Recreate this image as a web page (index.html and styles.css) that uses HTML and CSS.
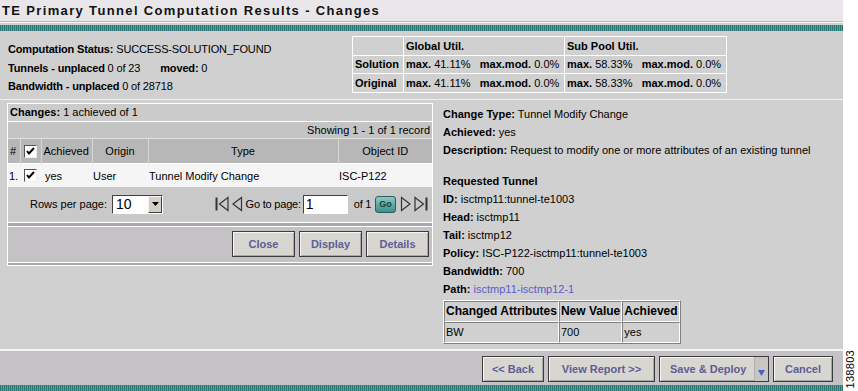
FILE: index.html
```html
<!doctype html>
<html>

<head>
    <link rel="stylesheet" href="styles.css">
</head>

<body>
    <div class="page">
        <div class="main">
            <div class="titlebar">TE Primary Tunnel Computation Results - Changes</div>
            <div class="stripe"></div>

            <div class="summary">
                <div class="status">
                    <div><b>Computation Status:</b> SUCCESS-SOLUTION_FOUND</div>
                    <div><b>Tunnels - unplaced</b> 0 of 23<span class="spacer"></span><b>moved:</b> 0</div>
                    <div><b>Bandwidth - unplaced</b> 0 of 28718</div>
                </div>
                <table class="util">
                    <tr>
                        <th class="c1"></th>
                        <th class="c2">Global Util.</th>
                        <th class="c3">Sub Pool Util.</th>
                    </tr>
                    <tr>
                        <th>Solution</th>
                        <td><b>max.</b> 41.11% &nbsp; <b>max.mod.</b> 0.0%</td>
                        <td><b>max.</b> 58.33% &nbsp; <b>max.mod.</b> 0.0%</td>
                    </tr>
                    <tr>
                        <th>Original</th>
                        <td><b>max.</b> 41.11% &nbsp; <b>max.mod.</b> 0.0%</td>
                        <td><b>max.</b> 58.33% &nbsp; <b>max.mod.</b> 0.0%</td>
                    </tr>
                </table>
            </div>

            <div class="content">
                <div class="changes">
                    <div class="changes-head"><b>Changes:</b> 1 achieved of 1</div>
                    <div class="showing">Showing 1 - 1 of 1 record</div>
                    <table class="grid">
                        <colgroup>
                            <col class="g-num">
                            <col class="g-chk">
                            <col class="g-ach">
                            <col class="g-org">
                            <col class="g-type">
                            <col>
                        </colgroup>
                        <tr>
                            <th class="left">#</th>
                            <th><span class="check"></span></th>
                            <th class="left">Achieved</th>
                            <th>Origin</th>
                            <th>Type</th>
                            <th>Object ID</th>
                        </tr>
                        <tr class="row">
                            <td>1.</td>
                            <td class="mid"><span class="check"></span></td>
                            <td class="pad">yes</td>
                            <td>User</td>
                            <td>Tunnel Modify Change</td>
                            <td>ISC-P122</td>
                        </tr>
                    </table>
                    <div class="pager">
                        <div class="rows">
                            Rows per page:
                            <span class="select"><span class="select-val">10</span><span class="select-btn"><svg width="7" height="4" viewBox="0 0 7 4"><path d="M0 0h7L3.5 4z" fill="#000"/></svg></span></span>
                        </div>
                        <div class="nav">
                            <svg class="nav-icon" width="14" height="16" viewBox="0 0 14 16"><path d="M1.5 1.5v13" stroke="#333" stroke-width="2"/><path d="M13 1.5L4.5 8L13 14.5z" fill="none" stroke="#333" stroke-width="1.2"/></svg>
                            <svg class="nav-icon" width="12" height="16" viewBox="0 0 12 16"><path d="M10.5 1.5L2 8L10.5 14.5z" fill="none" stroke="#333" stroke-width="1.2"/></svg>
                            <span class="goto">Go to page:</span>
                            <span class="page-input">1</span>
                            <span class="of">of 1</span>
                            <span class="go">Go</span>
                            <svg class="nav-icon" width="12" height="16" viewBox="0 0 12 16"><path d="M1.5 1.5L10 8L1.5 14.5z" fill="none" stroke="#333" stroke-width="1.2"/></svg>
                            <svg class="nav-icon" width="14" height="16" viewBox="0 0 14 16"><path d="M1 1.5L9.5 8L1 14.5z" fill="none" stroke="#333" stroke-width="1.2"/><path d="M12.5 1.5v13" stroke="#333" stroke-width="2"/></svg>
                        </div>
                    </div>
                    <div class="sep"></div>
                    <div class="actions">
                        <button class="btn w63">Close</button>
                        <button class="btn w63">Display</button>
                        <button class="btn w63">Details</button>
                    </div>
                    <div class="sep bottom"></div>
                </div>

                <div class="details">
                    <div><b>Change Type:</b> Tunnel Modify Change</div>
                    <div><b>Achieved:</b> yes</div>
                    <div><b>Description:</b> Request to modify one or more attributes of an existing tunnel</div>
                    <div class="gap"><b>Requested Tunnel</b></div>
                    <div><b>ID:</b> isctmp11:tunnel-te1003</div>
                    <div><b>Head:</b> isctmp11</div>
                    <div><b>Tail:</b> isctmp12</div>
                    <div><b>Policy:</b> ISC-P122-isctmp11:tunnel-te1003</div>
                    <div><b>Bandwidth:</b> 700</div>
                    <div><b>Path:</b> <span class="link">isctmp11-isctmp12-1</span></div>
                    <table class="attrs">
                        <tr>
                            <th>Changed Attributes</th>
                            <th>New Value</th>
                            <th>Achieved</th>
                        </tr>
                        <tr>
                            <td>BW</td>
                            <td>700</td>
                            <td>yes</td>
                        </tr>
                    </table>
                </div>
            </div>

            <div class="footer">
                <button class="btn w62">&lt;&lt; Back</button>
                <button class="btn w107">View Report &gt;&gt;</button>
                <button class="btn split"><span class="split-label">Save &amp; Deploy</span><span class="split-arrow"><svg width="7" height="6" viewBox="0 0 7 6"><path d="M0 0h7L3.5 6z" fill="#4b5fc8"/></svg></span></button>
                <button class="btn w60">Cancel</button>
            </div>
            <div class="stripe"></div>
        </div>
        <div class="strip">
            <span class="figno">138803</span>
        </div>
    </div>
</body>

</html>
```

FILE: styles.css
```css
body {
    margin: 0;
    background: #fff;
    font-family: "Liberation Sans", Arial, sans-serif;
    font-size: 11px;
    color: #000;
    overflow: hidden
}

.page {
    display: flex;
    height: 391px;
    width: 858px;
}

.main {
    width: 843px;
    display: flex;
    flex-direction: column;
    background: #d0d0d0;
}

.strip {
    width: 15px;
    display: flex;
    align-items: flex-end;
    justify-content: center;
    background: #fff;
}

.figno {
    writing-mode: vertical-rl;
    transform: rotate(180deg);
    font-size: 11px;
    line-height: 11px;
    padding-top: 2px;
    letter-spacing: 0.3px;
}

.titlebar {
    height: 21px;
    line-height: 22px;
    padding-left: 2px;
    background: #e8e6e8;
    border-bottom: 1px solid #b8b8b8;
    box-shadow: 0 1px 0 #f8f8f8;
    font-size: 13px;
    font-weight: bold;
    letter-spacing: 1.35px;
    color: #111;
    margin-bottom: 3px;
}

.stripe {
    height: 6px;
    background: repeating-linear-gradient(90deg, #2a7672 0 1px, #53a39d 1px 2px);
    flex: none;
}

.summary {
    display: flex;
    height: 68px;
    padding-left: 8px;
    border-bottom: 1px solid #f0f0f0;
}

.status {
    width: 344px;
    padding-top: 9px;
    line-height: 18.5px;
    letter-spacing: -0.15px;
}

.spacer {
    display: inline-block;
    width: 20px;
}

.util {
    border-collapse: collapse;
    margin-top: 5px;
    height: 57px;
    align-self: flex-start;
}

.util th,
.util td {
    border: 1px solid #fff;
    padding: 0 1px 0 2px;
    text-align: left;
    white-space: nowrap;
}

.util .c1 { width: 47px; }
.util .c2 { width: 157px; }
.util .c3 { width: 158px; }

.content {
    display: flex;
    height: 248px;
}

.changes {
    width: 424px;
    margin: 3px 0 0 7px;
    border-left: 1px solid #fff;
    border-right: 1px solid #fff;
    align-self: flex-start;
}

.changes-head {
    height: 17px;
    line-height: 17px;
    padding-left: 2px;
    background: #cbcbcb;
    border-top: 1px solid #fff;
    border-bottom: 1px solid #fff;
}

.showing {
    height: 16px;
    line-height: 16px;
    text-align: right;
    background: #c4c4c4;
    padding-right: 2px;
}

.grid {
    width: 100%;
    border-collapse: collapse;
    table-layout: fixed;
}

.grid .g-num { width: 12px; }
.grid .g-chk { width: 21px; }
.grid .g-ach { width: 51px; }
.grid .g-org { width: 56px; }
.grid .g-type { width: 190px; }

.grid th {
    height: 24px;
    background: #b7b7b7;
    font-weight: normal;
    border-left: 1px solid #d8d8d8;
    border-top: 1px solid #e0e0e0;
    padding: 0;
}

.grid th.left {
    text-align: left;
    padding-left: 2px;
}

.grid th:first-child {
    border-left: none;
}

.grid td {
    height: 23px;
    background: #f5f5f5;
    border-top: 1px solid #fff;
    text-align: left;
    padding: 0 0 0 1px;
    white-space: nowrap;
}

.grid td.mid {
    text-align: center;
    padding: 0;
}

.grid td.pad {
    padding-left: 4px;
}

.check {
    display: inline-block;
    width: 11px;
    height: 11px;
    background: #fff url("data:image/svg+xml,%3Csvg xmlns='http://www.w3.org/2000/svg' width='11' height='11'%3E%3Cpath d='M2 5l2 2.5L9 2' fill='none' stroke='%23000' stroke-width='2'/%3E%3C/svg%3E") no-repeat;
    border: 1px solid;
    border-color: #555 #eee #eee #555;
    vertical-align: middle;
}

.pager {
    display: flex;
    align-items: center;
    justify-content: space-between;
    height: 34px;
    background: #c9c9c9;
    padding: 0 4px 0 22px;
}

.rows {
    display: flex;
    align-items: center;
    gap: 5px;
}

.select {
    display: flex;
    width: 49px;
    height: 17px;
    background: #fff;
    border: 1px solid;
    border-color: #404040 #fff #fff #404040;
    font-size: 14px;
}

.select-val {
    flex: 1;
    line-height: 17px;
    padding-left: 3px;
}

.select-btn {
    width: 14px;
    display: flex;
    align-items: center;
    justify-content: center;
    background: #d4d0c8;
    border: 1px solid;
    border-color: #f4f4f4 #404040 #404040 #f4f4f4;
    box-sizing: border-box;
}

.nav {
    display: flex;
    align-items: center;
    gap: 2px;
}

.goto {
    margin-left: 1px;
    letter-spacing: -0.2px;
}

.page-input {
    width: 41px;
    height: 17px;
    line-height: 17px;
    padding-left: 2px;
    background: #fff;
    border: 1px solid;
    border-color: #404040 #fff #fff #404040;
    font-size: 14px;
}

.of {
    margin-left: 4px;
    letter-spacing: -0.3px;
}

.go {
    width: 19px;
    height: 15px;
    line-height: 15px;
    border-radius: 3px;
    background: linear-gradient(#8cc8c4, #3f8f8b);
    border: 1px solid #2b5f5c;
    color: #12413f;
    font-size: 9px;
    font-weight: bold;
    text-align: center;
    margin: 0 2px;
}

.sep {
    height: 3px;
    border-top: 1px solid #fff;
    border-bottom: 1px solid #fff;
    background: #a8a8a8;
    margin-top: 1px;
}

.sep.bottom {
    margin-top: 0;
    height: 2px;
}

.actions {
    display: flex;
    justify-content: flex-end;
    gap: 4px;
    padding: 4px 3px 5px;
    background: #c4c2c4;
    height: 26px;
}

.btn {
    font-family: "Liberation Sans", Arial, sans-serif;
    font-size: 11px;
    font-weight: bold;
    color: #5d5d96;
    background: #d8d6d0;
    border: 1px solid #3c3c3c;
    box-shadow: inset 1px 1px 0 #f4f4f4, inset -1px -1px 0 #a8a8a8;
    height: 26px;
    padding: 0;
    margin: 0;
}

.w63 { width: 63px; }
.w62 { width: 62px; }
.w60 { width: 60px; }
.w107 { width: 107px; }

.split {
    display: flex;
    width: 110px;
    align-items: stretch;
}

.split-label {
    flex: 1;
    line-height: 24px;
    text-align: left;
    padding-left: 10px;
}

.split-arrow {
    width: 13px;
    display: flex;
    align-items: center;
    justify-content: center;
    padding-top: 8px;
    background: #c8c6c2;
    border-left: 1px solid #b0b0b0;
}

.details {
    padding: 5px 0 0 10px;
    line-height: 18px;
}

.details .gap {
    margin-top: 13px;
}

.link {
    color: #5a5acb;
}

.attrs {
    border-collapse: separate;
    border-spacing: 0;
    border: 1px solid #fff;
    border-right-color: #808080;
    border-bottom-color: #808080;
    margin-top: 2px;
}

.attrs th,
.attrs td {
    border: 1px solid;
    border-color: #808080 #fff #fff #808080;
    text-align: left;
    padding: 0 1px;
    height: 19px;
    line-height: 19px;
}

.attrs th {
    font-size: 12px;
}

.footer {
    display: flex;
    justify-content: flex-end;
    gap: 4px;
    padding: 5px 10px 3px 0;
    height: 26px;
    background: #c4c2c4;
    border-top: 2px solid #f4f4f4;
    margin-top: auto;
}
```
